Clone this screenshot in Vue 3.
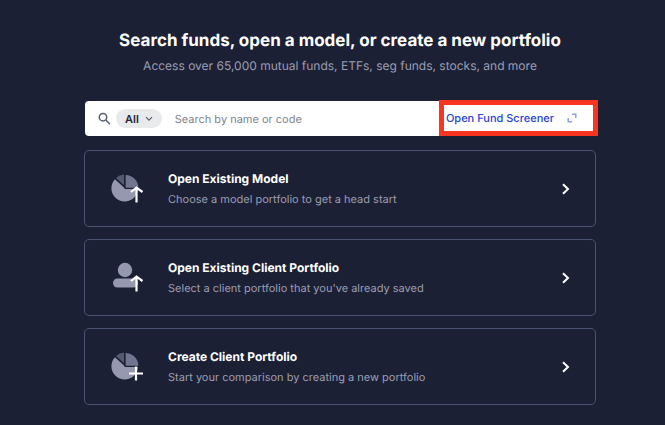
<template>
  <main class="start">
    <header class="intro">
      <h1>Search funds, open a model, or create a new portfolio</h1>
      <p>Access over 65,000 mutual funds, ETFs, seg funds, stocks, and more</p>
    </header>

    <form class="search" role="search" @submit.prevent>
      <label class="search-label" for="fund-search" aria-label="Search">
        <svg width="14" height="14" viewBox="0 0 14 14" fill="none" stroke="#565d6e" stroke-width="1.5">
          <circle cx="5" cy="5.2" r="3.7" />
          <path d="M7.8 8 12 12.2" />
        </svg>
      </label>
      <button type="button" class="filter">
        All
        <svg width="8" height="6" viewBox="0 0 8 6" fill="none" stroke="#565d6e" stroke-width="1.2">
          <path d="M1 1.2 4 4.2 7 1.2" />
        </svg>
      </button>
      <input id="fund-search" v-model="query" type="text" placeholder="Search by name or code">
      <a class="screener" href="#">
        Open Fund Screener
        <svg width="10" height="10" viewBox="0 0 10 10" fill="none" stroke="#8c9fe8" stroke-width="1.5">
          <path d="M5 1.2H8.8V5M1.2 5V8.8H5" />
        </svg>
      </a>
    </form>

    <a v-for="option in options" :key="option.title" class="option" href="#">
      <svg width="34" height="32" viewBox="0 0 34 32" fill="none">
        <g v-if="option.icon === 'pie'">
          <path d="M13 15V14.4L3.9 6.3A13.3 13.3 0 1 0 27 16H14.2Z" fill="#9698b0" />
          <path d="M14.6 2A13 13 0 0 1 27.4 14.8H14.6Z" fill="#71758e" />
          <path d="M13 1.5V12.2L5 5A13 13 0 0 1 13 1.5Z" fill="#555a73" />
        </g>
        <g v-else fill="#9698b0">
          <circle cx="14" cy="8" r="7.2" />
          <rect x="2" y="16.5" width="25" height="9" rx="4.5" />
        </g>
        <path v-if="option.action === 'open'" d="M25.5 29.5V15.5M20 19 25.5 14.6 31.5 19" stroke="#fff" stroke-width="2.2" />
        <path v-else d="M25 15.5V29.5M18 22.5H32" stroke="#fff" stroke-width="2.2" />
      </svg>
      <span class="option-text">
        <strong>{{ option.title }}</strong>
        <span>{{ option.description }}</span>
      </span>
      <svg width="8" height="12" viewBox="0 0 8 12" fill="none" stroke="#fff" stroke-width="2">
        <path d="M1 1.2 6 6 1 10.8" />
      </svg>
    </a>
  </main>
</template>

<script setup>
import { ref } from 'vue';

const query = ref('');

const options = [
  {
    title: 'Open Existing Model',
    description: 'Choose a model portfolio to get a head start',
    icon: 'pie',
    action: 'open'
  },
  {
    title: 'Open Existing Client Portfolio',
    description: "Select a client portfolio that you've already saved",
    icon: 'person',
    action: 'open'
  },
  {
    title: 'Create Client Portfolio',
    description: 'Start your comparison by creating a new portfolio',
    icon: 'pie',
    action: 'create'
  }
];
</script>

<style>
body {
  margin: 0;
  background: #1b2035;
}
</style>

<style scoped>
.start {
  display: flex;
  flex-direction: column;
  gap: 12px;
  max-width: 512px;
  margin: 0 auto;
  padding: 29px 16px 19px 31px;
  font-family: Inter, "Liberation Sans", sans-serif;
  text-rendering: geometricPrecision;
}

.intro {
  margin-bottom: 14px;
  text-align: center;
}

.intro h1 {
  margin: 0;
  color: #fff;
  font-size: 17px;
  font-weight: 700;
  line-height: 24px;
}

.intro p {
  margin: 4px 0 0;
  color: #9c9eb1;
  font-size: 12px;
  line-height: 18px;
}

.search {
  display: flex;
  align-items: center;
  height: 35px;
  margin: 0 -2px 2px 1px;
  padding-left: 13px;
  border-radius: 4px;
  background: #fff;
}

.search-label {
  display: flex;
  margin-right: 4px;
}

.filter {
  display: flex;
  align-items: center;
  gap: 6px;
  height: 19px;
  padding: 0 9px;
  border: 0;
  border-radius: 10px;
  background: #e9eaec;
  color: #23283a;
  font: 600 11px Inter, "Liberation Sans", sans-serif;
  text-rendering: inherit;
}

.search input {
  flex: 1;
  min-width: 0;
  padding: 0 13px;
  border: 0;
  outline: 0;
  background: none;
  color: #23283a;
  font: 11px Inter, "Liberation Sans", sans-serif;
  text-rendering: inherit;
}

.search input::placeholder {
  color: #7d828d;
}

.screener {
  display: flex;
  flex: none;
  align-items: center;
  align-self: flex-end;
  gap: 13px;
  box-sizing: border-box;
  height: 36px;
  padding: 0 16px 0 2px;
  border: 5px solid #f93420;
  color: #2743cf;
  font-size: 11px;
  font-weight: 500;
  text-decoration: none;
}

.option {
  display: flex;
  align-items: center;
  box-sizing: border-box;
  min-height: 77px;
  padding: 0 25px 0 26px;
  border: 1px solid #4b5372;
  border-radius: 5px;
  text-decoration: none;
}

.option-text {
  display: flex;
  flex: 1;
  flex-direction: column;
  gap: 4px;
  margin-left: 23px;
  color: #9c9eb1;
  font-size: 11px;
  line-height: 16px;
}

.option-text strong {
  color: #fff;
  font-size: 12px;
  font-weight: 700;
}
</style>
